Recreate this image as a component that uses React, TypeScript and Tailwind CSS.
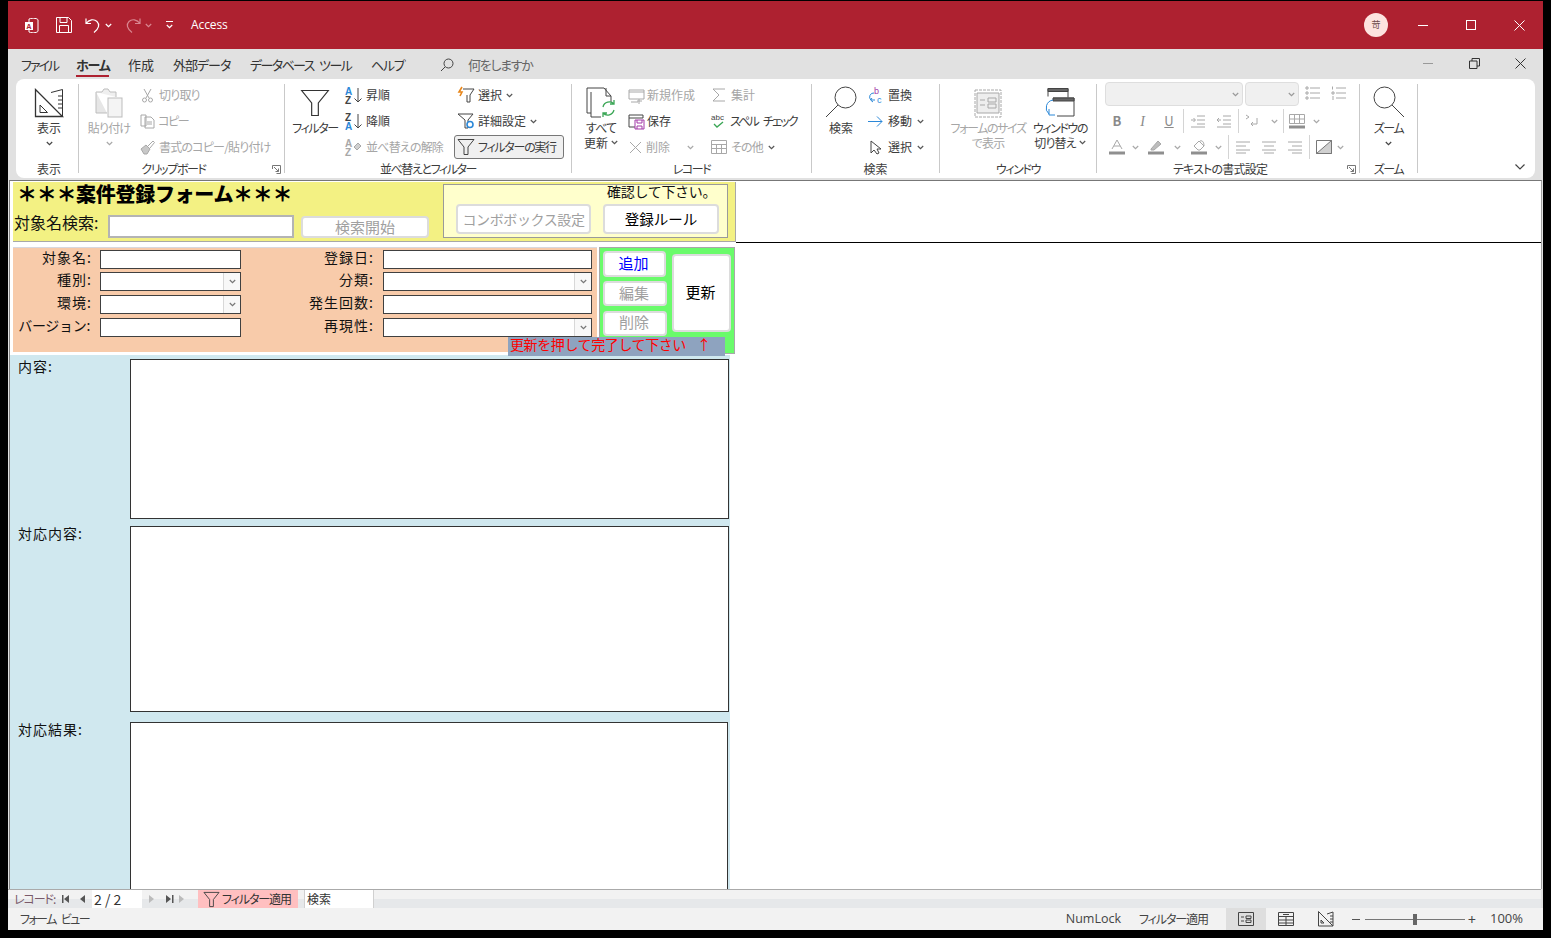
import type { ReactNode } from "react";

const ON = "#444444";
const OFF = "#a8a8a8";

// kana in the ribbon font is narrower than kanji
function track(s: string) {
  const kata = (s.match(/[\u30a0-\u30ff]/g) || []).length;
  const hira = (s.match(/[\u3040-\u309f]/g) || []).length;
  if (kata * 2 >= s.length) return "tracking-[-1.4px]";
  if (kata + hira > 0) return "tracking-[-0.8px]";
  return "tracking-normal";
}

function Ic({ w, h = w, children, c = ON }: { w: number; h?: number; children: ReactNode; c?: string }) {
  return (
    <svg width={w} height={h} viewBox={`0 0 ${w} ${h}`} fill="none" stroke={c} strokeWidth="1" className="shrink-0 overflow-visible">
      {children}
    </svg>
  );
}

function Chev({ c = "#555", className = "" }: { c?: string; className?: string }) {
  return (
    <svg width="7" height="5" viewBox="0 0 7 5" fill="none" stroke={c} strokeWidth="1.2" className={`shrink-0 ${className}`}>
      <path d="M.8 1 3.5 3.7 6.2 1" />
    </svg>
  );
}

function Funnel({ s = 18, c = ON }: { s?: number; c?: string }) {
  return (
    <svg width={s} height={s} viewBox="0 0 18 18" fill="none" stroke={c} strokeWidth={s > 20 ? 0.7 : 1} className="shrink-0">
      <path d="M1 1.5h16L11 9v7.5H7V9z" />
    </svg>
  );
}

function Lens({ flip }: { flip?: boolean }) {
  return flip ? (
    <Ic w={32}>
      <circle cx="11.5" cy="11.5" r="10.5" />
      <path d="M19 19 31 31" />
    </Ic>
  ) : (
    <Ic w={32}>
      <circle cx="20.5" cy="11.5" r="10.5" />
      <path d="M13 19 1 31" />
    </Ic>
  );
}

function DesignIcon() {
  return (
    <Ic w={30} c="#333">
      <path d="M1.5 1.5 28.5 28.5H1.5z" strokeWidth="1.3" />
      <path d="M6 17l7.5 7.5H6z" />
      <path d="M17 4.5 28.5 1.5V28M24 8h4M24 12h4M24 16h4M24 20h4" />
    </Ic>
  );
}

function SortLetters({ top, bottom, topC, botC }: { top: string; bottom: string; topC: string; botC: string }) {
  return (
    <>
      <text x="0" y="8" fontSize="10" fontWeight="700" fontFamily="Liberation Sans" fill={topC} stroke="none">{top}</text>
      <text x="0" y="17" fontSize="10" fontWeight="700" fontFamily="Liberation Sans" fill={botC} stroke="none">{bottom}</text>
    </>
  );
}

function Item({
  icon,
  label,
  off,
  chev,
  gap = "gap-[4px]",
  labelClass,
}: {
  icon: ReactNode;
  label: string;
  off?: boolean;
  chev?: boolean;
  gap?: string;
  labelClass?: string;
}) {
  return (
    <div className={`flex h-[26px] items-center ${gap} ${off ? "text-[#a6a6a6]" : "text-[#3c3c3c]"}`}>
      {icon}
      <span className={`whitespace-nowrap ${labelClass ?? track(label)}`}>{label}</span>
      {chev && <Chev className="ml-[1px]" />}
    </div>
  );
}

function Big({
  icon,
  lines,
  off,
  chev,
  chevInline,
  width,
}: {
  icon: ReactNode;
  lines: string[];
  off?: boolean;
  chev?: boolean;
  chevInline?: boolean;
  width: string;
}) {
  return (
    <div className={`flex shrink-0 flex-col items-center ${width} ${off ? "text-[#a6a6a6]" : "text-[#3c3c3c]"}`}>
      <div className="flex h-[38px] items-end pb-[2px]">{icon}</div>
      {lines.map((l, i) => (
        <div key={l} className={`flex h-[15px] items-center gap-[3px] whitespace-nowrap leading-[15px] ${track(l)}`}>
          {l}
          {chevInline && i === lines.length - 1 && <Chev />}
        </div>
      ))}
      {chev && (
        <div className="flex h-[17px] items-center">
          <Chev c={off ? OFF : "#444"} />
        </div>
      )}
    </div>
  );
}

function Launcher() {
  return (
    <svg width="9" height="9" viewBox="0 0 9 9" fill="none" stroke="#777" className="absolute right-[3px] top-[5px]">
      <path d="M.5 4V.5h8v8H4.5M2 2l4.5 4.5M6.5 3.5v3h-3" />
    </svg>
  );
}

function Group({
  width,
  label,
  launcher,
  labelPad = "",
  children,
}: {
  width: string;
  label: string;
  launcher?: boolean;
  labelPad?: string;
  children: ReactNode;
}) {
  return (
    <>
      <div className={`flex shrink-0 flex-col pt-[3px] ${width}`}>
        <div className="flex h-[78px]">{children}</div>
        <div className={`relative h-[18px] text-center leading-[18px] text-[#3c3c3c] ${track(label)} ${launcher ? "pr-[16px]" : ""} ${labelPad}`}>
          {label}
          {launcher && <Launcher />}
        </div>
      </div>
      <div className="my-[5px] w-px shrink-0 bg-[#c9c9c9]" />
    </>
  );
}

function Cell({ w, children }: { w: string; children?: ReactNode }) {
  return <div className={`flex h-[26px] shrink-0 items-center justify-center ${w}`}>{children}</div>;
}

function VSep() {
  return <div className="mx-[1px] h-[24px] w-px shrink-0 bg-[#d4d4d4]" />;
}

function Lines({ kind }: { kind: "l" | "c" | "r" }) {
  const a = kind === "l" ? "M1 3h14M1 7h10M1 11h14M1 14h10" : kind === "c" ? "M1 3h14M3 7h10M1 11h14M3 14h10" : "M1 3h14M5 7h10M1 11h14M5 14h10";
  return (
    <Ic w={16} c={OFF}>
      <path d={a} />
    </Ic>
  );
}

function Ribbon() {
  return (
    <div className="mx-[8px] flex h-[99px] shrink-0 rounded-lg bg-white font-['Noto_Sans_CJK_JP',sans-serif] text-[12px] [font-feature-settings:'palt']">
      <Group width="w-[62px]" label="表示" labelPad="pl-[4px]">
        <div className="pl-[4px]">
          <Big width="w-[58px]" icon={<DesignIcon />} lines={["表示"]} chev />
        </div>
      </Group>

      <Group width="w-[205px]" label="クリップボード" launcher>
        <div className="flex pl-[9px]">
          <Big
            off
            chev
            width="w-[42px]"
            lines={["貼り付け"]}
            icon={
              <Ic w={28} h={31} c="#bdbdbd">
                <path d="M1 5h6l2-3h4l2 3h6v5" fill="#efefef" />
                <path d="M1 5v21h11" fill="#e6e6e6" />
                <rect x="13" y="11" width="14" height="19" fill="#f4f4f4" />
              </Ic>
            }
          />
          <div className="ml-[10px] flex flex-col">
            <Item
              off
              label="切り取り"
              icon={
                <Ic w={15} c={OFF}>
                  <path d="M4 1l5 9M11 1 6 10" />
                  <circle cx="4.5" cy="12" r="2" />
                  <circle cx="10.5" cy="12" r="2" />
                </Ic>
              }
            />
            <Item
              off
              gap="gap-[2px]"
              label="コピー"
              icon={
                <Ic w={16} c={OFF}>
                  <path d="M1 2h5v11H1zM5 4h6l3 3v8H5zM7 9h5M7 11h5" />
                </Ic>
              }
            />
            <Item
              off
              label="書式のコピー/貼り付け"
              icon={
                <Ic w={15} c={OFF}>
                  <path d="M1 9 6 5l4 4-3 5H4L1 9z" fill="#c8c8c8" />
                  <path d="M8 6l5-5 1.5 1.5L10 8" />
                </Ic>
              }
            />
          </div>
        </div>
      </Group>

      <Group width="w-[286px]" label="並べ替えとフィルター">
        <div className="flex pl-[8px]">
          <Big width="w-[44px]" icon={<Funnel s={30} c="#333" />} lines={["フィルター"]} />
          <div className="ml-[8px] flex w-[109px] shrink-0 flex-col">
            <Item
              label="昇順"
              icon={
                <Ic w={17}>
                  <SortLetters top="A" bottom="Z" topC="#2b88d8" botC="#444" />
                  <path d="M13 1v14M9.5 11.5 13 15l3.500-3.500" />
                </Ic>
              }
            />
            <Item
              label="降順"
              icon={
                <Ic w={17}>
                  <SortLetters top="Z" bottom="A" topC="#444" botC="#2b88d8" />
                  <path d="M13 1v14M9.5 11.5 13 15l3.500-3.500" />
                </Ic>
              }
            />
            <Item
              off
              label="並べ替えの解除"
              icon={
                <Ic w={17} c={OFF}>
                  <SortLetters top="A" bottom="Z" topC={OFF} botC={OFF} />
                  <path d="M9 8l4-4 3 3-4 4z" fill="#d0d0d0" />
                </Ic>
              }
            />
          </div>
          <div className="flex flex-col">
            <div className="pl-[3px]">
              <Item
                chev
                gap="gap-[3px]"
                label="選択"
                icon={
                  <Ic w={18}>
                    <path d="M6 3h11l-4 6v7h-3V9" />
                    <path d="M5 1 2 6h3L3 10" stroke="#e8861a" strokeWidth="1.6" />
                  </Ic>
                }
              />
            </div>
            <div className="pl-[3px]">
              <Item
                chev
                gap="gap-[3px]"
                label="詳細設定"
                icon={
                  <Ic w={18}>
                    <path d="M1 2h15l-5 6v8H8V8z" />
                    <circle cx="13" cy="12.5" r="3" stroke="#2b88d8" strokeWidth="1.6" fill="#fff" />
                  </Ic>
                }
              />
            </div>
            <div className="mt-[1px] flex h-[24px] w-[110px] items-center gap-[3px] rounded-[3px] border border-[#777] bg-[#f0f0f0] pl-[2px] text-[#3c3c3c]">
              <Funnel />
              <span className="whitespace-nowrap tracking-[-1.3px]">フィルターの実行</span>
            </div>
          </div>
        </div>
      </Group>

      <Group width="w-[239px]" label="レコード">
        <div className="flex pl-[7px]">
          <Big
            width="w-[44px]"
            chevInline
            lines={["すべて", "更新"]}
            icon={
              <Ic w={30} h={31}>
                <path d="M1 1h17l7 8v6M20 1v8h5M5 5v25h10M1 1v25h4" />
                <path d="M17 20a6.5 6.5 0 0 1 11-3M28 23a6.5 6.5 0 0 1-11 3M28 13v4h-4M17 30v-4h4" stroke="#3aa655" strokeWidth="1.3" />
              </Ic>
            }
          />
          <div className="ml-[5px] flex w-[83px] shrink-0 flex-col">
            <Item
              off
              gap="gap-[2px]"
              label="新規作成"
              icon={
                <Ic w={17} c={OFF}>
                  <path d="M1 3h15v9H1zM1 5h15M3 15h7M11 12v5M9 14h5" />
                </Ic>
              }
            />
            <Item
              gap="gap-[2px]"
              label="保存"
              icon={
                <Ic w={17}>
                  <path d="M1 2h14v3H1zM1 5v9h6" />
                  <path d="M7 7h9v9H7zM9 7v3h5V7M9 16v-3h5v3" stroke="#a33ba8" />
                </Ic>
              }
            />
            <div className="flex items-center">
              <Item
                off
                gap="gap-[3px]"
                label="削除"
                icon={
                  <Ic w={15} c={OFF}>
                    <path d="M2 2l11 11M13 2 2 13" />
                  </Ic>
                }
              />
              <Chev c={OFF} className="ml-[17px]" />
            </div>
          </div>
          <div className="flex flex-col">
            <Item
              off
              label="集計"
              icon={
                <Ic w={16} c={OFF}>
                  <path d="M14 2H2l6 6-6 6h12" />
                </Ic>
              }
            />
            <Item
              gap="gap-[3px]"
              label="スペル チェック"
              labelClass="tracking-[-1.8px] [word-spacing:4px]"
              icon={
                <Ic w={16}>
                  <text x="0" y="7" fontSize="8" fontFamily="Liberation Sans" fill="#444" stroke="none">abc</text>
                  <path d="M3 11l3 3 6-5" stroke="#3aa655" strokeWidth="1.3" />
                </Ic>
              }
            />
            <Item
              off
              chev
              label="その他"
              icon={
                <Ic w={16} c={OFF}>
                  <path d="M.5 1.5h15v13H.5zM.5 5.500h15M.5 9.500h15M5.500 5.500v9M10.500 5.500v9" />
                </Ic>
              }
            />
          </div>
        </div>
      </Group>

      <Group width="w-[127px]" label="検索">
        <div className="flex pl-[9px]">
          <Big width="w-[40px]" icon={<Lens />} lines={["検索"]} />
          <div className="ml-[6px] flex flex-col">
            <Item
              label="置換"
              icon={
                <Ic w={17}>
                  <text x="7" y="7" fontSize="9" fontFamily="Liberation Sans" fill="#a33ba8" stroke="none">b</text>
                  <text x="10" y="16" fontSize="9" fontFamily="Liberation Sans" fill="#2b88d8" stroke="none">c</text>
                  <path d="M7 6a4 4 0 0 0-3 7h4M5 11l-1.500 2L6 15" stroke="#2b88d8" />
                </Ic>
              }
            />
            <Item
              chev
              label="移動"
              icon={
                <Ic w={17}>
                  <path d="M1 8.500h14M10 3.500l5 5-5 5" stroke="#2b88d8" />
                </Ic>
              }
            />
            <Item
              chev
              label="選択"
              icon={
                <Ic w={17}>
                  <path d="M4 2v12l3-3 3 4 2-1-2-4h4z" />
                </Ic>
              }
            />
          </div>
        </div>
      </Group>

      <Group width="w-[156px]" label="ウィンドウ">
        <div className="flex pl-[8px]">
          <Big
            off
            width="w-[80px]"
            lines={["フォームのサイズ", "で表示"]}
            icon={
              <Ic w={28} h={29} c={OFF}>
                <path d="M1 1h26v27H1z" strokeDasharray="3 1" />
                <path d="M3 4h22v20H3z" fill="#eee" />
                <path d="M6 11h5M6 16h5M14 9h8v4h-8zM14 15h8v4h-8z" />
              </Ic>
            }
          />
          <div className="ml-[2px]">
            <Big
              width="w-[60px]"
              chevInline
              lines={["ウィンドウの", "切り替え"]}
              icon={
                <Ic w={30} h={31}>
                  <path d="M3 1.500h20v9M3 1.500v8M8 11h21v18H12" />
                  <path d="M3 1.500h20v3H3z" fill="#666" />
                  <path d="M8 11h21v3H8z" fill="#666" />
                  <path d="M8 13a8 8 0 0 0-4 14M4 22v6h6" stroke="#2b88d8" />
                </Ic>
              }
            />
          </div>
        </div>
      </Group>

      <Group width="w-[262px]" label="テキストの書式設定" launcher>
        <div className="flex flex-col pl-[8px]">
          <div className="flex h-[26px] items-start">
            <div className="flex h-[24px] w-[138px] items-center justify-end rounded-[4px] border border-[#dedede] bg-[#f0f0f0] pr-[3px]">
              <Chev c="#999" />
            </div>
            <div className="ml-[2px] flex h-[24px] w-[54px] items-center justify-end rounded-[4px] border border-[#dedede] bg-[#f0f0f0] pr-[3px]">
              <Chev c="#999" />
            </div>
            <div className="ml-[6px] mt-[3px]">
              <Ic w={16} c={OFF}>
                <path d="M5 3h10M5 8h10M5 13h10M1 2h2v2H1zM1 7h2v2H1zM1 12h2v2H1z" />
              </Ic>
            </div>
            <div className="ml-[10px] mt-[3px]">
              <Ic w={16} c={OFF}>
                <path d="M5 3h10M5 8h10M5 13h10M1.500 1.500v3M1 7h2v2H1zM1 12h2M1 14h2" />
              </Ic>
            </div>
          </div>
          <div className="flex items-center text-[#8a8a8a]">
            <Cell w="w-[24px]">
              <span className="text-[13px] font-bold">B</span>
            </Cell>
            <Cell w="w-[27px]">
              <span className="font-['Liberation_Serif',serif] text-[14px] italic">I</span>
            </Cell>
            <Cell w="w-[26px]">
              <span className="text-[13px] underline">U</span>
            </Cell>
            <VSep />
            <Cell w="w-[26px]">
              <Ic w={16} c={OFF}>
                <path d="M7 3h8M7 7h8M7 11h8M1 14h14M1 7h4M3.500 5 5.500 7l-2 2" />
              </Ic>
            </Cell>
            <Cell w="w-[26px]">
              <Ic w={16} c={OFF}>
                <path d="M7 3h8M7 7h8M7 11h8M1 14h14M1 7h4M3 5 1 7l2 2" />
              </Ic>
            </Cell>
            <VSep />
            <Cell w="w-[26px]">
              <Ic w={16} c={OFF}>
                <path d="M1 2l3 2-3 2M12 5v6H6M8 9l-2 2 2 2" />
              </Ic>
            </Cell>
            <Cell w="w-[16px]">
              <Chev c={OFF} />
            </Cell>
            <VSep />
            <Cell w="w-[24px]">
              <Ic w={16} c={OFF}>
                <path d="M.5 1.500h15v9H.5zM.5 6h15M5.500 1.500v9M10.500 1.500v9" />
                <path d="M0 14h16" strokeWidth="3" stroke="#8f8f8f" />
              </Ic>
            </Cell>
            <Cell w="w-[14px]">
              <Chev c={OFF} />
            </Cell>
          </div>
          <div className="flex items-center">
            <Cell w="w-[24px]">
              <Ic w={16} c={OFF}>
                <path d="M3 10 8 1l5 9M5 7h6" />
                <path d="M0 14h16" strokeWidth="3" stroke="#8f8f8f" />
              </Ic>
            </Cell>
            <Cell w="w-[12px]">
              <Chev c={OFF} />
            </Cell>
            <Cell w="w-[30px]">
              <Ic w={16} c={OFF}>
                <path d="M3 10 10 2l3 3-7 6H3z" fill="#bdbdbd" />
                <path d="M0 14h16" strokeWidth="3" stroke="#8f8f8f" />
              </Ic>
            </Cell>
            <Cell w="w-[12px]">
              <Chev c={OFF} />
            </Cell>
            <Cell w="w-[32px]">
              <Ic w={16} c={OFF}>
                <path d="M3 7l5-5 5 5-4 4H7z" />
                <path d="M9 2c3-1 4 2 4 5" />
                <path d="M0 14h16" strokeWidth="3" stroke="#8f8f8f" />
              </Ic>
            </Cell>
            <Cell w="w-[6px]">
              <Chev c={OFF} />
            </Cell>
            <Cell w="w-[6px]" />
            <VSep />
            <Cell w="w-[26px]">
              <Lines kind="l" />
            </Cell>
            <Cell w="w-[26px]">
              <Lines kind="c" />
            </Cell>
            <Cell w="w-[26px]">
              <Lines kind="r" />
            </Cell>
            <VSep />
            <Cell w="w-[26px]">
              <Ic w={16} c="#777">
                <path d="M.5 1.500h15v13H.5z" />
                <path d="M.5 14.500 15.500 1.500v13z" fill="#d0d0d0" />
              </Ic>
            </Cell>
            <Cell w="w-[6px]">
              <Chev c={OFF} />
            </Cell>
          </div>
        </div>
      </Group>

      <Group width="w-[57px]" label="ズーム">
        <Big width="w-full" icon={<Lens flip />} lines={["ズーム"]} chev />
      </Group>

      <div className="flex flex-1 items-end justify-end pb-[8px] pr-[10px]">
        <svg width="10" height="6" viewBox="0 0 10 6" fill="none" stroke="#444" strokeWidth="1.2">
          <path d="M.5.5 5 5 9.500.5" />
        </svg>
      </div>
    </div>
  );
}

function TitleBar() {
  return (
    <div className="flex h-[48px] shrink-0 items-center bg-[#ae2130] pl-[15px] font-['Open_Sans',sans-serif] text-[12px] text-white">
      <div className="flex w-[16px] justify-center">
        <svg width="15" height="15" viewBox="0 0 15 15">
          <path d="M5 1c4-1.500 9-.5 9 1v11c0 1.500-5 2.500-9 1z" fill="none" stroke="#fff" />
          <path d="M1 4h8v8H1z" fill="#fff" />
          <text x="2.500" y="10.500" fontSize="7" fontWeight="700" fill="#ae2130">A</text>
        </svg>
      </div>
      <div className="ml-[17px] flex">
        <Ic w={16} c="#fff">
          <path d="M.5.5h12l3 3v12H.5zM4 .5v5h7v-5M3.500 15.500v-7h9v7" />
        </Ic>
      </div>
      <div className="ml-[13px] flex items-center gap-[3px]">
        <Ic w={17} c="#fff">
          <path d="M1 1.500v5h5M1 6.500c3-4 8-5 11-2s2 7-3 11" strokeWidth="1.2" />
        </Ic>
        <Chev c="#fff" />
      </div>
      <div className="ml-[12px] flex items-center gap-[4px]">
        <Ic w={17} c="#d98690">
          <path d="M16 1.500v5h-5M16 6.500c-3-4-8-5-11-2s-2 7 3 11" strokeWidth="1.2" />
        </Ic>
        <Chev c="#d98690" />
      </div>
      <div className="ml-[14px] flex flex-col items-center gap-[2px]">
        <div className="h-px w-[7px] bg-white" />
        <Chev c="#fff" />
      </div>
      <span className="ml-[18px] tracking-[-0.1px]">Access</span>
      <div className="ml-auto flex items-center">
        <div className="mr-[11px] flex h-[24px] w-[24px] items-center justify-center rounded-full bg-[#fde3df] font-['Noto_Sans_CJK_JP',sans-serif] text-[9px] text-[#6a4a4a]">
          苛
        </div>
        <div className="flex w-[48px] justify-center">
          <div className="h-px w-[10px] bg-white" />
        </div>
        <div className="flex w-[48px] justify-center">
          <div className="h-[10px] w-[10px] border border-white" />
        </div>
        <div className="flex w-[48px] justify-center">
          <Ic w={11} c="#fff">
            <path d="M.5.5l10 10M10.500.5l-10 10" />
          </Ic>
        </div>
      </div>
    </div>
  );
}

function TabBar() {
  return (
    <div className="flex h-[30px] shrink-0 items-center pl-[13px] pt-[1px] font-['Noto_Sans_CJK_JP',sans-serif] text-[13px] tracking-[-1.3px] text-[#333] [font-feature-settings:'palt']">
      <span className="w-[55px] tracking-[-2px]">ファイル</span>
      <span className="relative w-[52px] font-bold tracking-[-1.2px]">
        ホーム
        <span className="absolute left-0 top-[20px] h-[2px] w-[33px] bg-[#ae2130]" />
      </span>
      <span className="w-[45px] tracking-normal">作成</span>
      <span className="w-[77px] tracking-[-1px]">外部データ</span>
      <span className="w-[121px] tracking-[-1.6px] [word-spacing:4px]">データベース ツール</span>
      <span className="w-[69px]">ヘルプ</span>
      <Ic w={14}>
        <circle cx="8.500" cy="5.500" r="4.500" />
        <path d="M5 9 1 13" />
      </Ic>
      <span className="ml-[14px] text-[#666]">何をしますか</span>
      <div className="mb-[3px] ml-auto mr-[17px] flex items-center">
        <div className="h-px w-[10px] bg-[#999]" />
        <div className="ml-[36px]">
          <Ic w={11} c="#333">
            <path d="M.5 3h7.500v7.500H.5zM3 3V.5h7.500V8H8" />
          </Ic>
        </div>
        <div className="ml-[35px]">
          <Ic w={11} c="#333">
            <path d="M.5.5l10 10M10.500.5l-10 10" />
          </Ic>
        </div>
      </div>
    </div>
  );
}

function FormBtn({ w, off, blue, children, className = "" }: { w: string; off?: boolean; blue?: boolean; children: ReactNode; className?: string }) {
  const color = off ? "text-[#a0a0a0]" : blue ? "text-[#0000ff]" : "text-black";
  return (
    <div className={`flex shrink-0 items-center justify-center whitespace-nowrap rounded-[4px] border-2 border-[#dcdcdc] bg-white ${w} ${color} ${className}`}>
      {children}
    </div>
  );
}

function Field({ w, combo }: { w: string; combo?: boolean }) {
  return (
    <div className={`flex h-[19px] shrink-0 justify-end border border-[#404040] bg-white ${w}`}>
      {combo && (
        <div className="flex w-[17px] items-center justify-center border-l border-[#d8d8d8] bg-[#f8f8f8]">
          <Chev c="#777" />
        </div>
      )}
    </div>
  );
}

function Row({ label, right, combo, rcombo, className = "" }: { label: string; right: string; combo?: boolean; rcombo?: boolean; className?: string }) {
  return (
    <div className={`flex h-[19px] items-center ${className}`}>
      <span className={`w-[79px] -translate-y-[3px] whitespace-nowrap text-right ${track(label) === "tracking-normal" ? "tracking-[1px]" : "pr-[2px] tracking-[-0.3px]"}`}>{label}</span>
      <div className="ml-[8px]">
        <Field w="w-[141px]" combo={combo} />
      </div>
      <span className="w-[133px] -translate-y-[3px] whitespace-nowrap text-right tracking-[1px]">{right}</span>
      <div className="ml-[9px]">
        <Field w="w-[209px]" combo={rcombo} />
      </div>
    </div>
  );
}

function MemoRow({ label, h, w = "w-[599px]", open, className = "" }: { label: string; h: string; w?: string; open?: boolean; className?: string }) {
  return (
    <div className={`flex shrink-0 ${className}`}>
      <span className="w-[120px] -translate-y-[2px] pl-[8px] tracking-[1px] leading-[18px]">{label}</span>
      <div className={`${h} ${w} border border-[#333] bg-white ${open ? "border-b-0" : ""}`} />
    </div>
  );
}

function FormArea() {
  return (
    <div className="mx-px flex min-h-0 flex-1 overflow-hidden border-l border-r border-t border-l-[#808080] border-r-[#a0a0a0] border-t-[#777] bg-white font-['Noto_Sans_CJK_JP',sans-serif] text-[14px] leading-none text-[#111]">
      <div className="flex w-[726px] shrink-0 flex-col pt-[1px]">
        {/* header */}
        <div className="ml-[3px] flex h-[60px] w-[723px] shrink-0 border-b border-r border-[#a8a8a8] bg-[#f3f183] pt-[2px]">
          <div className="flex w-[430px] shrink-0 flex-col pl-[4px]">
            <div className="h-[24px] -translate-y-[2px] whitespace-nowrap text-[20px] font-black leading-[24px] tracking-[-0.3px] text-black">＊＊＊案件登録フォーム＊＊＊</div>
            <div className="mt-[7px] flex items-center">
              <span className="-ml-[3px] w-[94px] -translate-y-[5px] whitespace-nowrap text-[16px]">対象名検索:</span>
              <div className="h-[23px] w-[186px] border-2 border-[#b4b4b4] bg-white" />
              <FormBtn off w="w-[128px]" className="ml-[7px] h-[22px] pb-[1px] text-[15px]">検索開始</FormBtn>
            </div>
          </div>
          <div className="flex h-[54px] w-[285px] shrink-0 flex-col border border-[#9a9a9a] bg-[#ffffcc] pl-[12px]">
            <div className="h-[19px] -translate-y-px whitespace-nowrap pl-[151px] tracking-[-0.3px]">確認して下さい。</div>
            <div className="flex">
              <FormBtn off w="w-[135px]" className="h-[30px] tracking-[-0.4px]">コンボボックス設定</FormBtn>
              <FormBtn w="w-[116px]" className="ml-[12px] h-[30px] text-[14.5px]">登録ルール</FormBtn>
            </div>
          </div>
        </div>
        {/* entry rows */}
        <div className="relative ml-[3px] mt-[5px] flex h-[108px] shrink-0 items-start">
          <div className="h-[105px] w-[584px] shrink-0 border-t border-[#d8d8e0] bg-[#f8cbaa] pt-[2px]">
            <Row label="対象名:" right="登録日:" />
            <Row label="種別:" right="分類:" combo rcombo className="mt-[3px]" />
            <Row label="環境:" right="発生回数:" combo className="mt-[4px]" />
            <Row label="バージョン:" right="再現性:" rcombo className="mt-[4px]" />
          </div>
          <div className="ml-[2px] flex h-[107px] w-[136px] shrink-0 border border-[#a8a8a8] bg-[#6afb6b] pl-[3px] pt-[3px]">
            <div className="flex w-[69px] shrink-0 flex-col">
              <FormBtn blue w="w-[63px]" className="h-[26px] pb-[3px] pr-[2px] text-[15px]">追加</FormBtn>
              <FormBtn off w="w-[64px]" className="mt-[4px] h-[25px] pb-[3px] pr-[2px] text-[15px]">編集</FormBtn>
              <FormBtn off w="w-[64px]" className="mt-[5px] h-[25px] pb-[4px] pr-[2px] text-[15px]">削除</FormBtn>
            </div>
            <FormBtn w="w-[59px]" className="mt-[3px] h-[78px] pb-[3px] pr-[2px] text-[15px]">更新</FormBtn>
          </div>
          <div className="absolute left-[495px] top-[90px] flex h-[19px] w-[217px] items-center whitespace-nowrap bg-[#8ea3bf] pl-[2px] text-[#ff0000]">
            <span className="-translate-y-[3px] tracking-[-0.4px]">更新を押して完了して下さい</span>
            <span className="ml-[11px] -translate-y-[3px]">↑</span>
          </div>
        </div>
        {/* memo area */}
        <div className="flex min-h-0 w-[720px] flex-1 flex-col overflow-hidden bg-[#d0e8ef] pt-[4px]">
          <MemoRow label="内容:" h="h-[160px]" />
          <MemoRow label="対応内容:" h="h-[186px]" className="mt-[7px]" />
          <MemoRow label="対応結果:" h="h-[167px]" w="w-[598px]" open className="mt-[10px]" />
        </div>
      </div>
      <div className="h-[62px] flex-1 border-b border-black" />
    </div>
  );
}

function NavTri({ d, c = "#555" }: { d: string; c?: string }) {
  return (
    <svg width="8" height="8" viewBox="0 0 8 8" fill={c} className="shrink-0">
      <path d={d} />
    </svg>
  );
}

function NavBar() {
  return (
    <div className="mr-[2px] flex h-[19px] shrink-0 items-center border-t border-[#aaaaaa] bg-[linear-gradient(#f2f2f2_50%,#e6e8ea_50%)] font-['Noto_Sans_CJK_JP',sans-serif] text-[12px] text-[#333] [font-feature-settings:'palt']">
      <span className="ml-[6px] w-[45px] whitespace-nowrap tracking-[-1.1px] text-[#7a5a6a]">レコード:</span>
      <div className="ml-[3px]">
        <NavTri d="M0 0h1.500v8H0zM7 0v8L2 4z" />
      </div>
      <div className="ml-[9px]">
        <NavTri d="M6 0v8L1 4z" />
      </div>
      <div className="ml-[5px] flex h-[18px] w-[50px] items-center bg-white pl-[2px] text-[14px]">2 / 2</div>
      <div className="ml-[6px]">
        <NavTri c="#bbb" d="M1 0v8l5-4z" />
      </div>
      <div className="ml-[10px]">
        <NavTri d="M0 0v8l5-4zM6 0h1.500v8H6z" />
      </div>
      <div className="ml-[5px]">
        <NavTri c="#bbb" d="M0 0v8l5-4z" />
      </div>
      <div className="ml-[11px] flex h-[18px] w-[100px] items-center gap-[2px] bg-[#ffbfc0] pl-[5px]">
        <Funnel s={17} />
        <span className="whitespace-nowrap tracking-[-1.1px]">フィルター適用</span>
      </div>
      <div className="ml-[6px] flex h-[18px] w-[70px] items-center border-l border-r border-[#d0d0d0] bg-white pl-[2px]">検索</div>
    </div>
  );
}

function StatusBar() {
  return (
    <div className="flex h-[22px] shrink-0 items-center bg-[#f2f2f2] font-['Noto_Sans_CJK_JP',sans-serif] text-[12px] text-[#444] [font-feature-settings:'palt']">
      <span className="ml-[12px] tracking-[-1.6px] [word-spacing:4px]">フォーム ビュー</span>
      <div className="ml-auto flex h-full items-center">
        <span className="font-['Open_Sans',sans-serif] text-[12.5px]">NumLock</span>
        <span className="ml-[18px] w-[87px] whitespace-nowrap tracking-[-1.1px]">フィルター適用</span>
        <div className="flex h-full w-[40px] items-center justify-center bg-[#dedede]">
          <Ic w={16} c="#444">
            <path d="M.5 1.500h15v13H.5zM3 6h3M3 10h3M8 5h5v2.500H8zM8 9h5v2.500H8z" />
          </Ic>
        </div>
        <div className="flex h-full w-[40px] items-center justify-center">
          <Ic w={16} c="#444">
            <path d="M.5 1.500h15v13H.5zM.5 5.500h15M.5 9h15M.5 12h15M8 5.500v9M5 3.500h6" />
          </Ic>
        </div>
        <div className="flex h-full w-[40px] items-center justify-center">
          <Ic w={16} c="#444">
            <path d="M.5.5 15 15H.5zM3 9l3 3H3zM9 3l6-2v14M12 5h3M12 8h3M12 11h3" />
          </Ic>
        </div>
        <div className="ml-[6px] h-px w-[8px] bg-[#555]" />
        <div className="relative ml-[5px] h-px w-[100px] bg-[#777]">
          <div className="absolute left-[48px] top-[-5px] h-[11px] w-[4px] bg-[#666]" />
        </div>
        <span className="ml-[3px] w-[12px] text-[14px] leading-none">+</span>
        <span className="ml-[10px] mr-[20px] w-[33px] font-['Open_Sans',sans-serif] text-[13px]">100%</span>
      </div>
    </div>
  );
}

export default function App() {
  return (
    <div className="h-[938px] w-[1551px] overflow-hidden bg-black px-[8px] pb-[8px] pt-px">
      <div className="flex h-full flex-col bg-[#e1e1e1]">
        <TitleBar />
        <TabBar />
        <Ribbon />
        <div className="h-[2px] shrink-0" />
        <FormArea />
        <NavBar />
        <StatusBar />
      </div>
    </div>
  );
}
